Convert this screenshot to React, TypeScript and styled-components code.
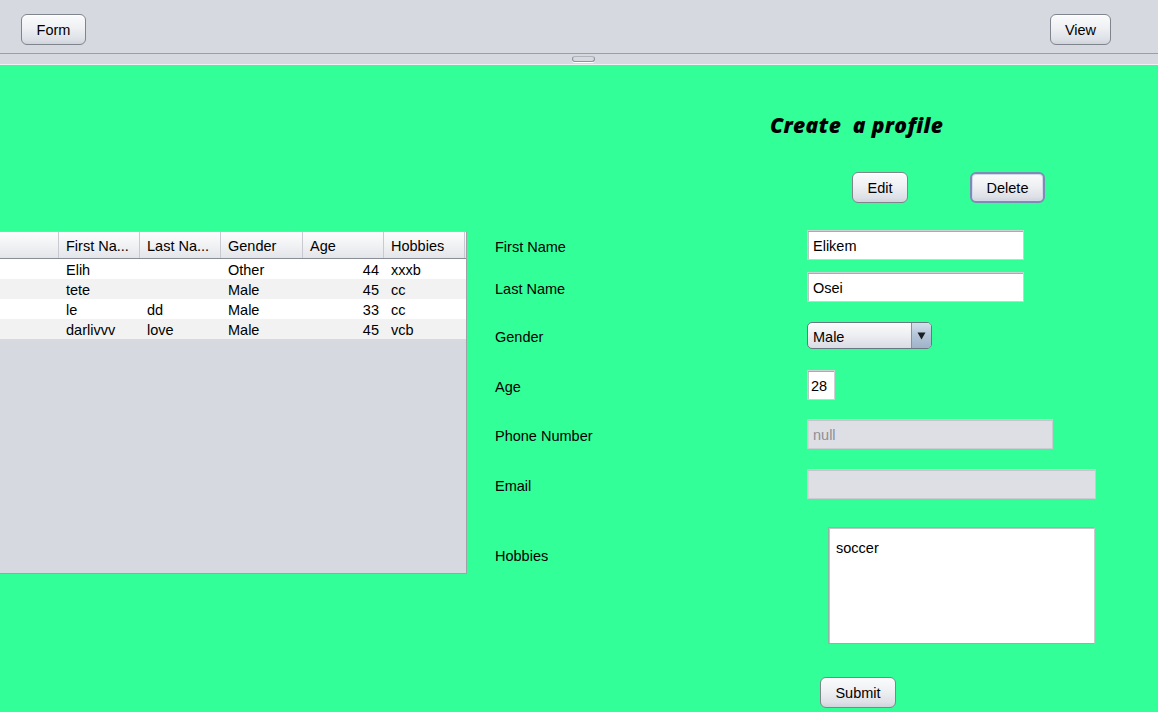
import React from "react";
import styled, { createGlobalStyle, css } from "styled-components";

const Global = createGlobalStyle`
  html, body { margin: 0; padding: 0; overflow: hidden; }
  body { font-family: "Liberation Sans", Arial, sans-serif; background: #d6d9df; }
  * { box-sizing: border-box; }
`;

const Page = styled.div`
  width: 1158px;
  height: 712px;
  display: flex;
  flex-direction: column;
  font-size: 14.5px;
  color: #000;
`;

const Toolbar = styled.div`
  height: 54px;
  padding: 14px 47px 0 21px;
  display: flex;
  align-items: flex-start;
  justify-content: space-between;
  background: #d6d9df;
  border-bottom: 1px solid #9b9ea4;
`;

const Splitter = styled.div`
  height: 11px;
  background: #d6d9df;
  border-bottom: 1px solid #eef0f3;
  display: flex;
  justify-content: flex-start;
  padding: 2px 0 0 572px;
`;

const Handle = styled.div`
  width: 23px;
  height: 6px;
  border: 1px solid #8f9298;
  border-top-color: #b0b3b8;
  border-radius: 3px;
  box-shadow: 0 1px 0 #ffffff;
`;

const Button = styled.button<{ $w: number; $focus?: boolean }>`
  width: ${(p) => p.$w}px;
  height: 31px;
  padding: 1px 0 0;
  font-family: "Liberation Sans", Arial, sans-serif;
  font-size: 14.5px;
  color: #000;
  border: 1px solid #80848c;
  border-radius: 6px;
  background: linear-gradient(#fbfbfc 0%, #eef0f3 45%, #dde0e6 85%, #cfd3da 100%);
  box-shadow: inset 0 1px 0 #ffffff;
  ${(p) =>
    p.$focus &&
    css`
      border: 2px solid #7e8cb5;
      box-shadow: inset 0 0 0 1px #d2d8ea;
    `}
`;

const Main = styled.div`
  flex: 1;
  background: #33ff99;
  display: flex;
  align-items: flex-start;
`;

const TablePanel = styled.div`
  margin-top: 166px;
  width: 467px;
  height: 343px;
  background: #d6d9df;
  border-right: 1px solid #9fa2a7;
  border-bottom: 1px solid #9fa2a7;
  border-top: 1px solid #b8bbc0;
`;

const cols = "59px 81px 81px 82px 81px 81px";

const HeaderRow = styled.div`
  display: grid;
  grid-template-columns: ${cols};
  height: 27px;
  border-bottom: 1px solid #8a8d94;
  background: linear-gradient(#fdfdfe 0%, #f1f2f4 50%, #e2e5ea 100%);
`;

const HeaderCell = styled.div`
  padding: 1px 0 0 7px;
  display: flex;
  align-items: center;
  border-right: 1px solid #c7cad0;
  white-space: nowrap;
  overflow: hidden;
`;

const DataRow = styled.div<{ $alt: boolean }>`
  display: grid;
  grid-template-columns: ${cols};
  height: 20px;
  background: ${(p) => (p.$alt ? "#f2f2f2" : "#ffffff")};
`;

const Cell = styled.div<{ $right?: boolean }>`
  display: flex;
  align-items: center;
  padding: ${(p) => (p.$right ? "2px 5px 0 0" : "2px 0 0 7px")};
  justify-content: ${(p) => (p.$right ? "flex-end" : "flex-start")};
  white-space: nowrap;
  overflow: hidden;
`;

const FormArea = styled.div`
  padding-left: 28px;
  display: flex;
  flex-direction: column;
`;

const Title = styled.h1`
  margin: 45px 0 0 275px;
  height: 30px;
  line-height: 30px;
  font-family: "Open Sans", Lato, sans-serif;
  font-style: italic;
  font-weight: 800;
  font-size: 21px;
  letter-spacing: 0.35px;
  white-space: pre;
  color: #000;
`;

const ActionRow = styled.div`
  margin: 32px 0 0 357px;
  display: flex;
  align-items: center;
  gap: 62px;
`;

const Row = styled.div<{ $mt: number; $h: number }>`
  margin-top: ${(p) => p.$mt}px;
  height: ${(p) => p.$h}px;
  display: flex;
  align-items: center;
`;

const Label = styled.label<{ $top?: number }>`
  width: 312px;
  flex: none;
  align-self: ${(p) => (p.$top ? "flex-start" : "center")};
  margin-top: ${(p) => p.$top ?? 0}px;
  padding-top: 4px;
  line-height: 17px;
`;

const TextField = styled.input<{ $w: number; $disabled?: boolean }>`
  width: ${(p) => p.$w}px;
  height: 30px;
  padding: 2px 0 0 5px;
  font-family: "Liberation Sans", Arial, sans-serif;
  font-size: 14.5px;
  color: ${(p) => (p.$disabled ? "#8e9095" : "#000")};
  background: ${(p) => (p.$disabled ? "#dddfe4" : "#ffffff")};
  border: 1px solid ${(p) => (p.$disabled ? "#c9cbd0" : "#cfd0d3")};
  box-shadow: inset 0 1px 0 ${(p) => (p.$disabled ? "#c4c6cb" : "#a9abaf")},
    inset 1px 0 0 ${(p) => (p.$disabled ? "#d2d4d8" : "#c2c3c6")};
  outline: none;
`;

const Combo = styled.div`
  width: 125px;
  height: 27px;
  display: flex;
  border: 1px solid #6b7683;
  border-radius: 5px;
  overflow: hidden;
  background: linear-gradient(#fbfbfc 0%, #eceef2 50%, #d9dce3 100%);
`;

const ComboText = styled.div`
  flex: 1;
  display: flex;
  align-items: center;
  padding: 3px 0 0 5px;
`;

const ComboArrow = styled.div`
  width: 20px;
  display: flex;
  align-items: center;
  justify-content: center;
  border-left: 1px solid #8393a5;
  background: linear-gradient(#d5e0ec 0%, #b3c4d7 50%, #9fb3c9 100%);
`;

const TextArea = styled.textarea`
  margin-left: 21px;
  width: 267px;
  height: 117px;
  padding: 12px 7px;
  resize: none;
  font-family: "Liberation Sans", Arial, sans-serif;
  font-size: 14.5px;
  color: #000;
  background: #fff;
  border: 1px solid #8fb5a3;
  border-right-color: #c9cbcf;
  box-shadow: inset 1px 1px 0 #c3c5c9;
  outline: none;
`;

const SubmitRow = styled.div`
  margin: 33px 0 0 325px;
`;

const rows = [
  { first: "Elih", last: "", gender: "Other", age: 44, hobbies: "xxxb" },
  { first: "tete", last: "", gender: "Male", age: 45, hobbies: "cc" },
  { first: "le", last: "dd", gender: "Male", age: 33, hobbies: "cc" },
  { first: "darlivvv", last: "love", gender: "Male", age: 45, hobbies: "vcb" },
];

export default function App() {
  return (
    <Page>
      <Global />
      <Toolbar>
        <Button $w={65}>Form</Button>
        <Button $w={61}>View</Button>
      </Toolbar>
      <Splitter>
        <Handle />
      </Splitter>
      <Main>
        <TablePanel>
          <HeaderRow>
            <HeaderCell />
            <HeaderCell>First Na...</HeaderCell>
            <HeaderCell>Last Na...</HeaderCell>
            <HeaderCell>Gender</HeaderCell>
            <HeaderCell>Age</HeaderCell>
            <HeaderCell>Hobbies</HeaderCell>
          </HeaderRow>
          {rows.map((r, i) => (
            <DataRow key={i} $alt={i % 2 === 1}>
              <Cell />
              <Cell>{r.first}</Cell>
              <Cell>{r.last}</Cell>
              <Cell>{r.gender}</Cell>
              <Cell $right>{r.age}</Cell>
              <Cell>{r.hobbies}</Cell>
            </DataRow>
          ))}
        </TablePanel>
        <FormArea>
          <Title>{"Create  a profile"}</Title>
          <ActionRow>
            <Button $w={56}>Edit</Button>
            <Button $w={75} $focus>
              Delete
            </Button>
          </ActionRow>
          <Row $mt={27} $h={30}>
            <Label>First Name</Label>
            <TextField $w={217} defaultValue="Elikem" readOnly />
          </Row>
          <Row $mt={12} $h={30}>
            <Label>Last Name</Label>
            <TextField $w={217} defaultValue="Osei" readOnly />
          </Row>
          <Row $mt={20} $h={27}>
            <Label>Gender</Label>
            <Combo>
              <ComboText>Male</ComboText>
              <ComboArrow>
                <svg width="9" height="8" viewBox="0 0 9 8">
                  <path d="M0.5 0.5 L8.5 0.5 L4.5 7.5 Z" fill="#1a1d22" />
                </svg>
              </ComboArrow>
            </Combo>
          </Row>
          <Row $mt={21} $h={30}>
            <Label>Age</Label>
            <TextField $w={28} defaultValue="28" readOnly style={{ paddingLeft: 3 }} />
          </Row>
          <Row $mt={19} $h={30}>
            <Label>Phone Number</Label>
            <TextField $w={246} $disabled defaultValue="null" readOnly />
          </Row>
          <Row $mt={20} $h={30}>
            <Label>Email</Label>
            <TextField $w={289} $disabled defaultValue="" readOnly />
          </Row>
          <Row $mt={28} $h={117}>
            <Label $top={17}>Hobbies</Label>
            <TextArea defaultValue="soccer" readOnly />
          </Row>
          <SubmitRow>
            <Button $w={76}>Submit</Button>
          </SubmitRow>
        </FormArea>
      </Main>
    </Page>
  );
}
